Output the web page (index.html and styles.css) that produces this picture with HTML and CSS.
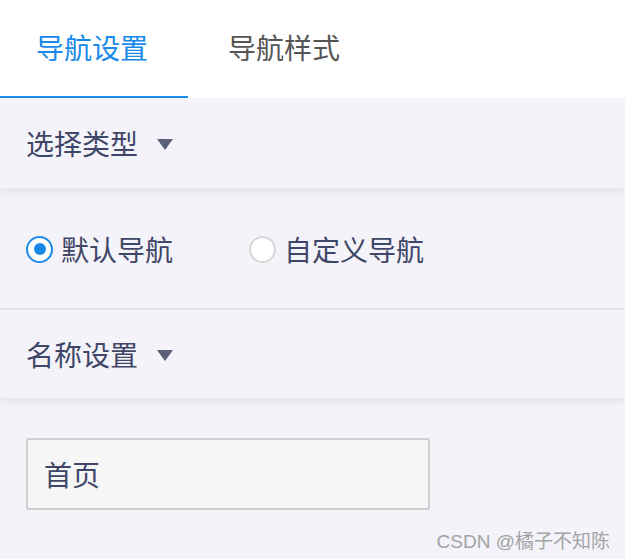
FILE: index.html
```html
<!DOCTYPE html>
<html lang="zh">
<head>
<meta charset="utf-8">
<link rel="stylesheet" href="styles.css">
</head>
<body>
<div class="tabs">
  <div class="tab active">导航设置</div>
  <div class="tab">导航样式</div>
</div>
<div class="section-head">选择类型<span class="caret"></span></div>
<div class="radios">
  <label class="radio checked"><span class="dot"></span>默认导航</label>
  <label class="radio"><span class="dot"></span>自定义导航</label>
</div>
<div class="section-head short">名称设置<span class="caret"></span></div>
<div class="field">
  <div class="input">首页</div>
</div>
<div class="watermark">CSDN @橘子不知陈</div>
</body>
</html>
```
FILE: styles.css
```css
html, body {
  margin: 0;
  padding: 0;
}
body {
  width: 625px;
  height: 559px;
  overflow: hidden;
  background: #f4f3f9;
  font-family: "Noto Sans CJK SC", "Noto Sans", sans-serif;
  color: #3f4667;
  position: relative;
}
.tabs {
  display: flex;
  height: 98px;
  background: #fff;
  position: relative;
  z-index: 2;
}
.tab {
  box-sizing: border-box;
  padding-top: 26px;
  font-size: 28px;
  line-height: 42px;
  color: #555;
}
.tab.active {
  width: 188px;
  padding-left: 36px;
  color: #1a8aea;
  border-bottom: 2px solid #1a8aea;
}
.tab + .tab {
  padding-left: 40px;
}
.section-head {
  height: 90px;
  box-sizing: border-box;
  padding-left: 26px;
  display: flex;
  align-items: center;
  font-size: 28px;
  background: #f4f3f9;
  box-shadow: 0 4px 8px rgba(0, 0, 0, 0.07);
  position: relative;
  z-index: 1;
}
.section-head.short {
  height: 88px;
}
.caret {
  width: 0;
  height: 0;
  margin-left: 19px;
  margin-top: 2px;
  border-left: 8px solid transparent;
  border-right: 8px solid transparent;
  border-top: 11px solid #5a6078;
}
.radios {
  height: 122px;
  box-sizing: border-box;
  display: flex;
  align-items: center;
  padding-left: 26px;
  gap: 76px;
  border-bottom: 2px solid #e6e5ec;
  padding-top: 2px;
}
.radio {
  display: flex;
  align-items: center;
  font-size: 28px;
  gap: 8px;
}
.dot {
  width: 27px;
  height: 27px;
  box-sizing: border-box;
  border-radius: 50%;
  border: 2px solid #d6d6d6;
  background: #fff;
  position: relative;
}
.radio.checked .dot {
  border-color: #1a8aea;
}
.radio.checked .dot::after {
  content: "";
  position: absolute;
  left: 5.5px;
  top: 5.5px;
  width: 12px;
  height: 12px;
  border-radius: 50%;
  background: #1a8aea;
}
.field {
  padding: 40px 0 0 26px;
}
.input {
  width: 404px;
  height: 72px;
  box-sizing: border-box;
  border: 2px solid #cfcfcf;
  border-radius: 3px;
  background: #f6f6f6;
  font-size: 28px;
  padding-left: 16px;
  display: flex;
  align-items: center;
}
.watermark {
  position: absolute;
  right: 15px;
  bottom: 6px;
  font-size: 19px;
  color: #a3a3a3;
  font-family: "Liberation Sans", "Noto Sans CJK SC", sans-serif;
}
```
